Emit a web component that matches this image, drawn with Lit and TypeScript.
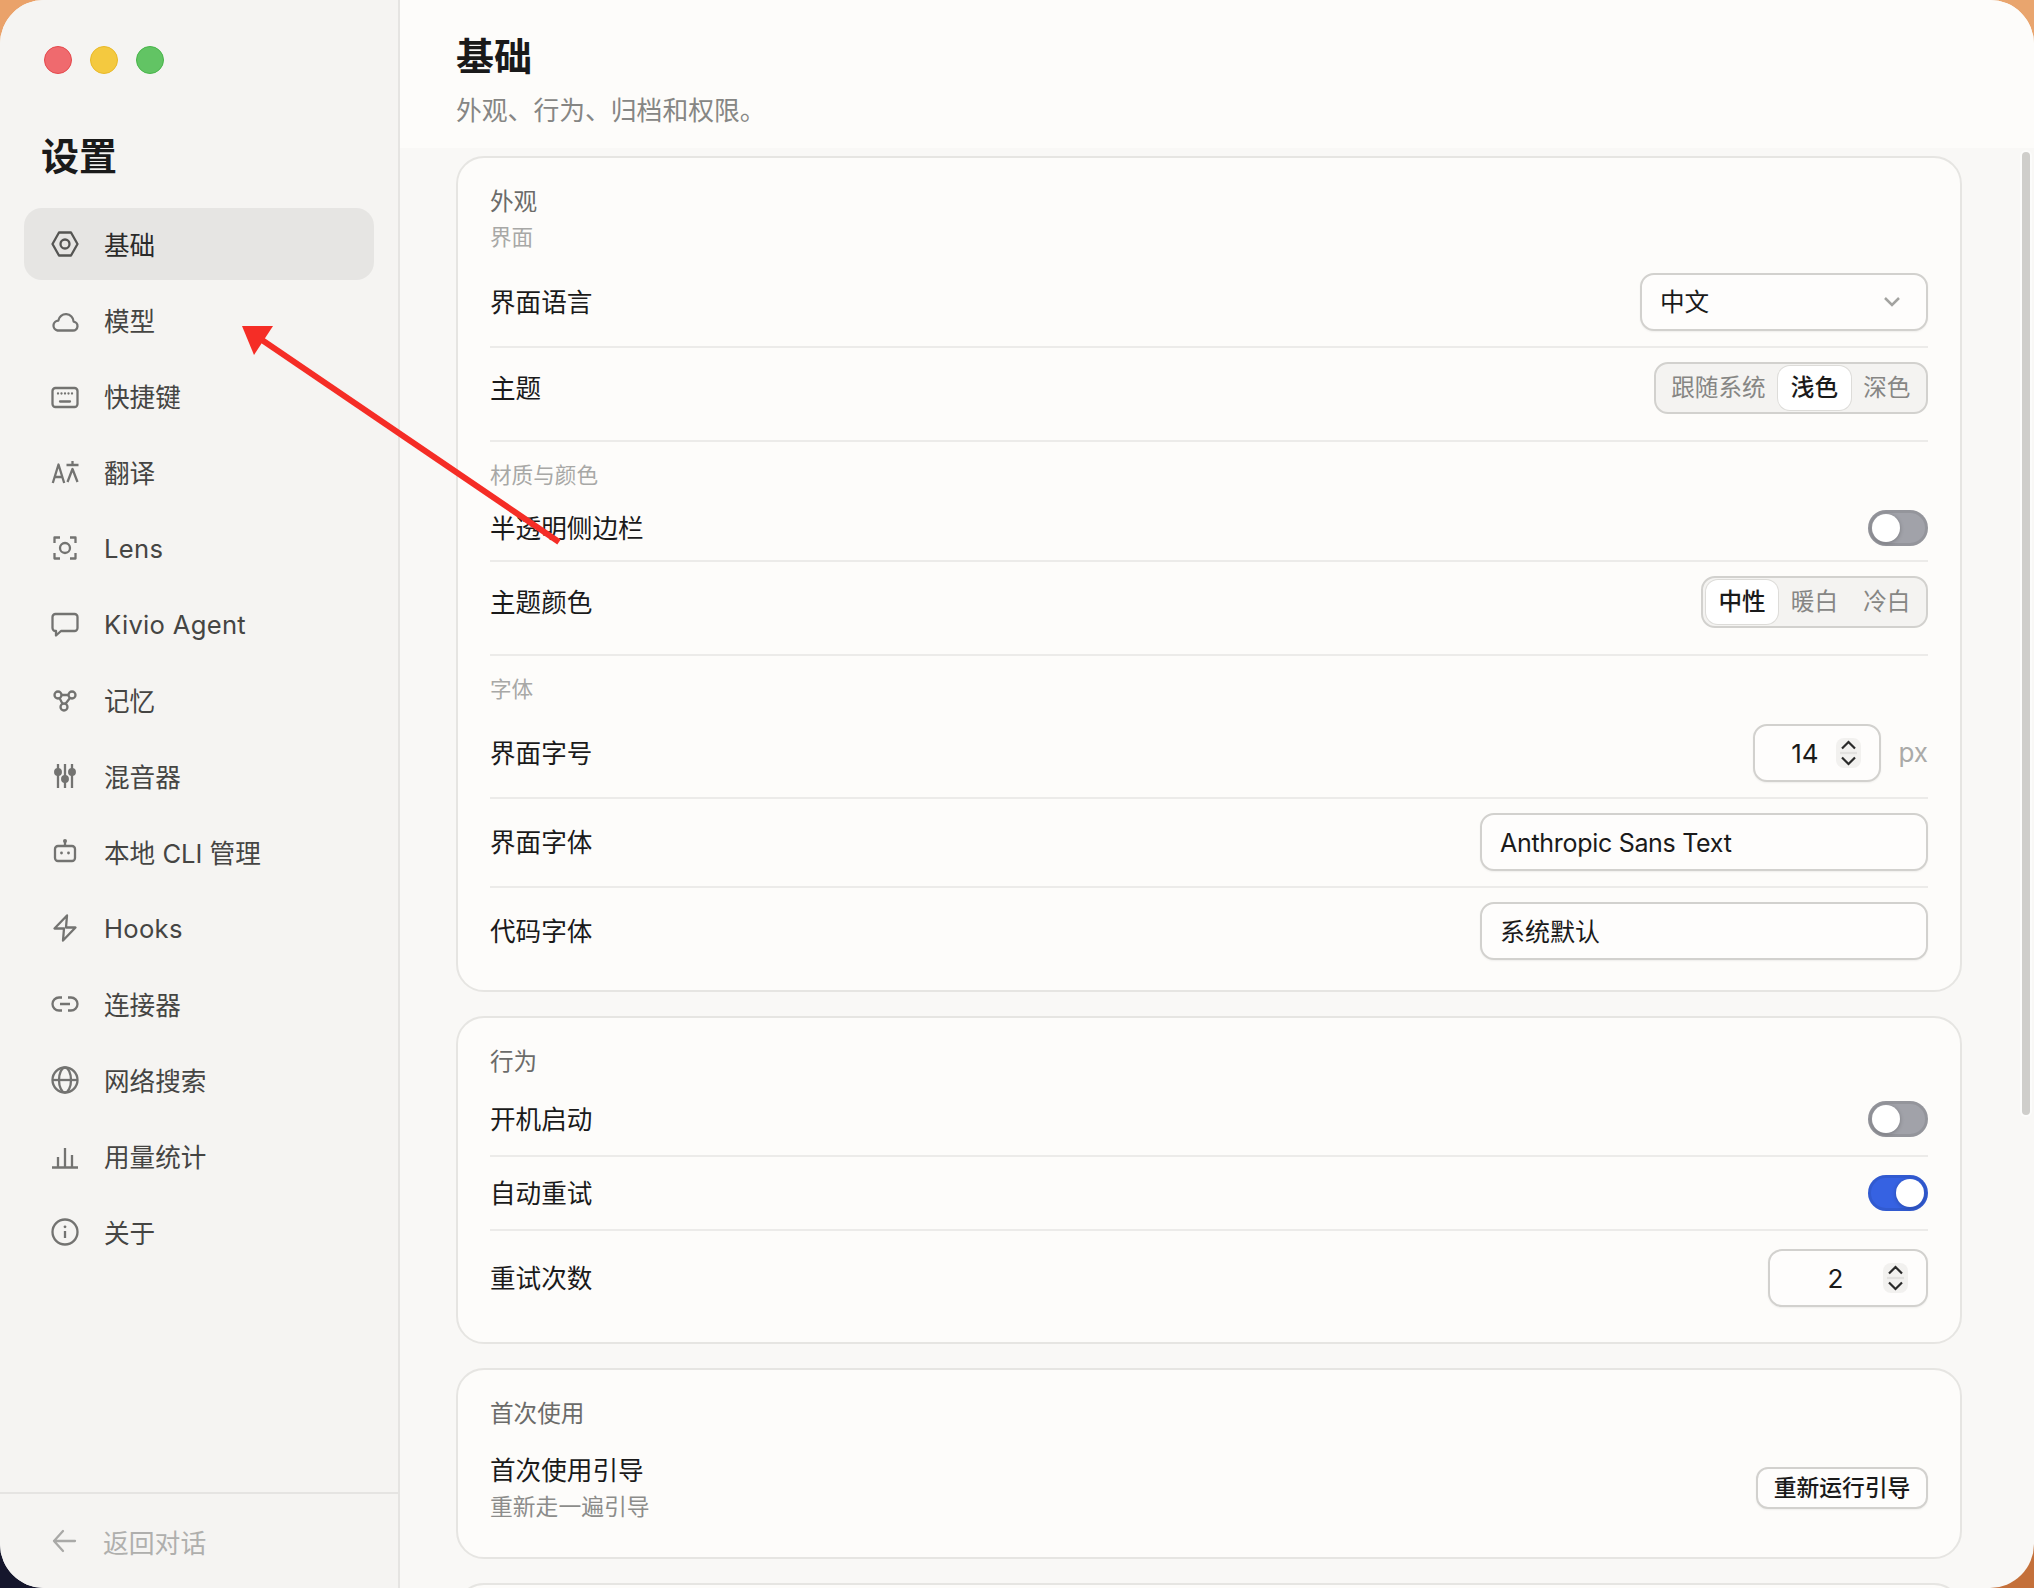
import { LitElement, html, css, svg } from 'lit'
import { customElement } from 'lit/decorators.js'

const navItems = [
  { label: '基础', icon: svg`<path d="M8 2.5h12L26.5 14 20 25.5H8L1.5 14z"/><circle cx="14" cy="14" r="4.5"/>`, active: true },
  { label: '模型', icon: svg`<path d="M6.5 24.5H22a4.5 4.5 0 0 0 .6-8.96A7.7 7.7 0 0 0 7.3 14.6a5 5 0 0 0-.8 9.9z"/>` },
  { label: '快捷键', icon: svg`<rect x="1.5" y="6" width="25" height="19" rx="3"/><path d="M7 11.5h.01M10.5 11.5h.01M14 11.5h.01M17.5 11.5h.01M21 11.5h.01M9 19.5h10" stroke-linecap="round"/>` },
  { label: '翻译', icon: svg`<path d="M1.8 25 7.5 6.5l5.7 18.5M3.8 19h7.4M15.5 7h12M21.5 3v4M16.5 24l5-13 5 13"/>` },
  { label: 'Lens', latin: true, icon: svg`<path d="M3.5 9V3.5H9M19 3.5h5.5V9M24.5 19v5.5H19M9 24.5H3.5V19"/><circle cx="14" cy="14" r="5"/>` },
  { label: 'Kivio Agent', latin: true, icon: svg`<path d="M4.5 4h19a3 3 0 0 1 3 3v11a3 3 0 0 1-3 3H10l-5 4.5V21h-.5a3 3 0 0 1-3-3V7a3 3 0 0 1 3-3z"/>` },
  { label: '记忆', icon: svg`<circle cx="7" cy="9" r="3.5"/><circle cx="21" cy="9" r="3.5"/><circle cx="13" cy="21" r="3.5"/><path d="M10.5 9h7M8.5 12l3 5.7M19 12l-4.5 5.7"/>` },
  { label: '混音器', icon: svg`<path d="M7 2v24M14 2v24M21 2v24"/><circle cx="7" cy="10" r="2.8" fill="currentColor"/><circle cx="14" cy="17" r="2.8" fill="currentColor"/><circle cx="21" cy="10" r="2.8" fill="currentColor"/>` },
  { label: '本地 CLI 管理', icon: svg`<rect x="4" y="8" width="20" height="15" rx="3"/><path d="M14 8V4"/><circle cx="14" cy="3" r="2" fill="currentColor" stroke="none"/><circle cx="10.5" cy="15" r="1.4" fill="currentColor" stroke="none"/><circle cx="17.5" cy="15" r="1.4" fill="currentColor" stroke="none"/>` },
  { label: 'Hooks', latin: true, icon: svg`<path d="M16 1.5 3.5 14.5H13l-1 12 12.500-13H15z"/>` },
  { label: '连接器', icon: svg`<path d="M11 7.5H8a6.5 6.5 0 0 0 0 13h3M17 7.5h3a6.5 6.5 0 0 1 0 13h-3M9 14h10"/>` },
  { label: '网络搜索', icon: svg`<circle cx="14" cy="14" r="12.5"/><ellipse cx="14" cy="14" rx="6" ry="12.5"/><path d="M1.5 14h25"/>` },
  { label: '用量统计', icon: svg`<path d="M1 25.5h26M7 25V15M14 25V6M21 25V13"/>` },
  { label: '关于', icon: svg`<circle cx="14" cy="14" r="12.5"/><path d="M14 13v7"/><circle cx="14" cy="8.8" r="1.4" fill="currentColor" stroke="none"/>` }
]

@customElement('app-root')
export class AppRoot extends LitElement {
  static styles = css`
    :host {
      display: block;
      position: relative;
      width: 2034px;
      height: 1588px;
      overflow: hidden;
      font-family: Inter, "Noto Sans CJK SC", sans-serif;
      background: conic-gradient(#e9a56e 0 90deg, #c4703a 90deg 180deg, #15162c 180deg 270deg, #eaa26a 270deg);
    }

    .window {
      display: flex;
      height: 100%;
      border-radius: 44px;
      overflow: hidden;
      background: #f9f8f6;
    }

    .sidebar {
      flex: none;
      width: 398px;
      display: flex;
      flex-direction: column;
      background: #f5f4f2;
      border-right: 2px solid #e5e4e2;
    }

    .lights {
      display: flex;
      gap: 18px;
      padding: 46px 0 0 44px;
    }

    .light {
      width: 28px;
      height: 28px;
      border-radius: 50%;
      box-sizing: border-box;
      border: 1px solid;
    }
    .red { background: #ef6a6e; border-color: #e5484c; }
    .yellow { background: #f4c93f; border-color: #e9b928; }
    .green { background: #62c464; border-color: #47b64a; }

    .sidebar h1 {
      margin: 55px 0 25px 41px;
      font-size: 38px;
      line-height: 54px;
      font-weight: 700;
      color: #1a1a1a;
    }

    nav {
      flex: 1;
      display: flex;
      flex-direction: column;
      gap: 4px;
      padding: 0 24px;
    }

    .item {
      display: flex;
      align-items: center;
      gap: 25px;
      height: 72px;
      padding-left: 27px;
      border-radius: 18px;
      font-size: 25.6px;
      color: #454543;
    }

    .item span { padding-bottom: 2px; }
    .item.latin span { padding-bottom: 0; letter-spacing: 0.3px; }

    .item.active {
      background: #e6e5e3;
      color: #2a2a2a;
    }

    .icon {
      flex: none;
      width: 28px;
      height: 28px;
      fill: none;
      stroke: currentColor;
      stroke-width: 2.3;
      stroke-linejoin: round;
      color: #737371;
    }
    .active .icon { color: #555553; }

    .back {
      flex: none;
      display: flex;
      align-items: center;
      gap: 25px;
      height: 96px;
      padding-left: 50px;
      border-top: 2px solid #e5e4e2;
      box-sizing: border-box;
      font-size: 25.8px;
      color: #afafad;
    }
    .back .icon { color: #a9a9a7; stroke-linecap: round; }

    main {
      flex: 1;
      min-width: 0;
      display: flex;
      flex-direction: column;
    }

    header {
      flex: none;
      height: 148px;
      box-sizing: border-box;
      padding: 29px 0 0 56px;
      background: #fdfcfa;
    }

    header h2 {
      margin: 0 0 10px;
      font-size: 38px;
      line-height: 54px;
      font-weight: 700;
      color: #1a1a1a;
    }

    header p {
      margin: 0;
      font-size: 25.8px;
      line-height: 36px;
      color: #868684;
    }

    .scroll {
      flex: 1;
      min-height: 0;
      overflow: hidden;
      display: flex;
      flex-direction: column;
      gap: 24px;
      padding: 8px 72px 0 56px;
    }

    .card {
      flex: none;
      padding: 27px 32px 17px;
      background: #fdfcfa;
      border: 2px solid #e6e5e2;
      border-radius: 28px;
    }

    .title {
      font-size: 23.6px;
      line-height: 34px;
      color: #6b6b69;
    }

    .sub {
      font-size: 21.6px;
      line-height: 30px;
      color: #a8a8a6;
    }

    .title + .sub { margin: 3px 0 7px; }
    .section {
      padding: 18px 0 12px;
      border-top: 2px solid #ecebe9;
    }
    .section > .sub { margin-bottom: 6px; }
    .section.plain { padding: 0 0 12px; border-top: 0; }
    .section:last-of-type { padding-bottom: 0; }

    .row {
      display: flex;
      align-items: center;
      justify-content: space-between;
      padding: 14px 0 15px;
      font-size: 25.6px;
      line-height: 34px;
      color: #1a1a1a;
    }
    .row > span { padding-top: 2px; }
    .row.line { border-bottom: 2px solid #ecebe9; }
    .row.seg-row { padding-bottom: 14px; }
    .row.tight { padding-bottom: 14px; }
    .row.roomy { padding: 18px 0; }
    .row.tail { padding-bottom: 13px; }
    .row.first { margin-top: 4px; }

    .control {
      box-sizing: border-box;
      height: 58px;
      display: flex;
      align-items: center;
      background: #fefdfc;
      border: 2px solid #d2d1ce;
      border-radius: 14px;
      box-shadow: 0 1px 2px rgba(0, 0, 0, 0.06);
      font-size: 25px;
      color: #1a1a1a;
    }

    .select {
      width: 288px;
      justify-content: space-between;
      padding: 0 25px 1px 18px;
      font-size: 24.6px;
    }
    .select span { padding: 0; }

    .field {
      width: 448px;
      padding: 2px 0 0 18px;
    }
    .field.latin { letter-spacing: -0.3px; }

    .chev {
      width: 18px;
      height: 12px;
      margin-top: 1px;
      fill: none;
      stroke: #a3a3a0;
      stroke-width: 2.5;
    }

    .seg {
      display: flex;
      padding: 2px 3px;
      background: #f4f3f1;
      border: 2px solid #d2d1ce;
      border-radius: 14px;
      font-size: 23.6px;
      line-height: 44px;
      color: #868684;
    }

    .seg span {
      padding: 0 12.6px;
      border-radius: 12px;
    }

    .seg .on {
      background: #fff;
      box-shadow: 0 0 0 1px #dddcd9;
      color: #1a1a1a;
      font-weight: 500;
    }

    .toggle {
      position: relative;
      flex: none;
      width: 60px;
      height: 36px;
      border-radius: 18px;
      background: #a1a2a9;
      box-shadow: inset 0 0 0 3px rgba(0, 0, 0, 0.08);
    }

    .toggle i {
      position: absolute;
      top: 4px;
      left: 4px;
      width: 28px;
      height: 28px;
      border-radius: 50%;
      background: #fff;
      box-shadow: 0 1px 4px rgba(0, 0, 0, 0.25);
    }

    .toggle.on { background: #3662e2; }
    .toggle.on i { left: 28px; }

    .unit {
      display: flex;
      align-items: center;
      gap: 17px;
    }
    .unit small { font-size: 26px; color: #aaaaa8; }

    .number { padding-right: 18px; font-size: 26px; }
    .number b {
      flex: 1;
      padding: 1px 0 0 18px;
      text-align: center;
      font-weight: 400;
    }
    .w128 { width: 128px; }
    .w160 { width: 160px; }

    .step {
      flex: none;
      width: 25px;
      height: 30px;
      display: block;
      border-radius: 8px;
      background: #f2f1ef;
    }
    .step svg {
      display: block;
      width: 25px;
      height: 30px;
      fill: none;
      stroke: #2a2a2a;
      stroke-width: 2.2;
    }

    .desc { font-size: 22.8px; line-height: 30px; color: #8c8c8a; margin-top: 3px; }
    .label { line-height: 36px; }

    .button {
      box-sizing: border-box;
      height: 42px;
      padding: 0 15.6px;
      display: flex;
      align-items: center;
      background: #fefdfc;
      border: 2px solid #d2d1ce;
      border-radius: 12px;
      box-shadow: 0 1px 2px rgba(0, 0, 0, 0.06);
      font-size: 22.8px;
      font-weight: 500;
      color: #1a1a1a;
    }

    .stub { height: 80px; box-sizing: border-box; }

    .scrollbar {
      position: absolute;
      top: 152px;
      left: 2022px;
      width: 8px;
      height: 963px;
      border-radius: 4px;
      background: #cfcecb;
      box-shadow: 0 0 0 2px #fcfcfb;
    }

    .arrow {
      position: absolute;
      inset: 0;
      width: 100%;
      height: 100%;
      pointer-events: none;
    }
  `

  private toggle (on = false) {
    return html`<div class="toggle ${on ? 'on' : ''}"><i></i></div>`
  }

  private stepper () {
    return html`<span class="step"><svg viewBox="0 0 25 30"><path d="M6 10.5 12.5 4 19 10.5M6 19.5 12.5 26 19 19.5"/><path d="M4 15h17" stroke="#e2e1df"/></svg></span>`
  }

  private seg (items: string[], on: string) {
    return html`<div class="seg">${items.map(i => html`<span class=${i === on ? 'on' : ''}>${i}</span>`)}</div>`
  }

  render () {
    return html`
      <div class="window">
        <aside class="sidebar">
          <div class="lights">
            <span class="light red"></span>
            <span class="light yellow"></span>
            <span class="light green"></span>
          </div>
          <h1>设置</h1>
          <nav>
            ${navItems.map(item => html`
              <div class="item ${item.active ? 'active' : ''} ${item.latin ? 'latin' : ''}">
                <svg class="icon" viewBox="0 0 28 28">${item.icon}</svg>
                <span>${item.label}</span>
              </div>
            `)}
          </nav>
          <div class="back">
            <svg class="icon" viewBox="0 0 28 28"><path d="M13 4 4 14l9 10M4 14h21"/></svg>
            <span>返回对话</span>
          </div>
        </aside>
        <main>
          <header>
            <h2>基础</h2>
            <p>外观、行为、归档和权限。</p>
          </header>
          <div class="scroll">
            <section class="card">
              <div class="title">外观</div>
              <div class="sub">界面</div>
              <div class="section plain">
                <div class="row line">
                  <span>界面语言</span>
                  <div class="control select">
                    <span>中文</span>
                    <svg class="chev" viewBox="0 0 18 12"><path d="M2 2l7 7 7-7"/></svg>
                  </div>
                </div>
                <div class="row seg-row">
                  <span>主题</span>
                  ${this.seg(['跟随系统', '浅色', '深色'], '浅色')}
                </div>
              </div>
              <div class="section">
                <div class="sub">材质与颜色</div>
                <div class="row line tight">
                  <span>半透明侧边栏</span>
                  ${this.toggle()}
                </div>
                <div class="row seg-row">
                  <span>主题颜色</span>
                  ${this.seg(['中性', '暖白', '冷白'], '中性')}
                </div>
              </div>
              <div class="section">
                <div class="sub">字体</div>
                <div class="row line">
                  <span>界面字号</span>
                  <div class="unit">
                    <div class="control number w128"><b>14</b>${this.stepper()}</div>
                    <small>px</small>
                  </div>
                </div>
                <div class="row line">
                  <span>界面字体</span>
                  <div class="control field latin">Anthropic Sans Text</div>
                </div>
                <div class="row tail">
                  <span>代码字体</span>
                  <div class="control field">系统默认</div>
                </div>
              </div>
            </section>

            <section class="card">
              <div class="title">行为</div>
              <div class="row line roomy first">
                <span>开机启动</span>
                ${this.toggle()}
              </div>
              <div class="row line roomy">
                <span>自动重试</span>
                ${this.toggle(true)}
              </div>
              <div class="row roomy">
                <span>重试次数</span>
                <div class="control number w160"><b>2</b>${this.stepper()}</div>
              </div>
            </section>

            <section class="card">
              <div class="title">首次使用</div>
              <div class="row roomy first">
                <div>
                  <div class="label">首次使用引导</div>
                  <div class="desc">重新走一遍引导</div>
                </div>
                <div class="button">重新运行引导</div>
              </div>
            </section>

            <section class="card stub"></section>
          </div>
        </main>
      </div>
      <div class="scrollbar"></div>
      <svg class="arrow" viewBox="0 0 2034 1588">
        <path d="M262 340 559 542" stroke="#f52d26" stroke-width="6" fill="none"/>
        <path d="M242 326h31l-19 29z" fill="#f52d26"/>
      </svg>
    `
  }
}
